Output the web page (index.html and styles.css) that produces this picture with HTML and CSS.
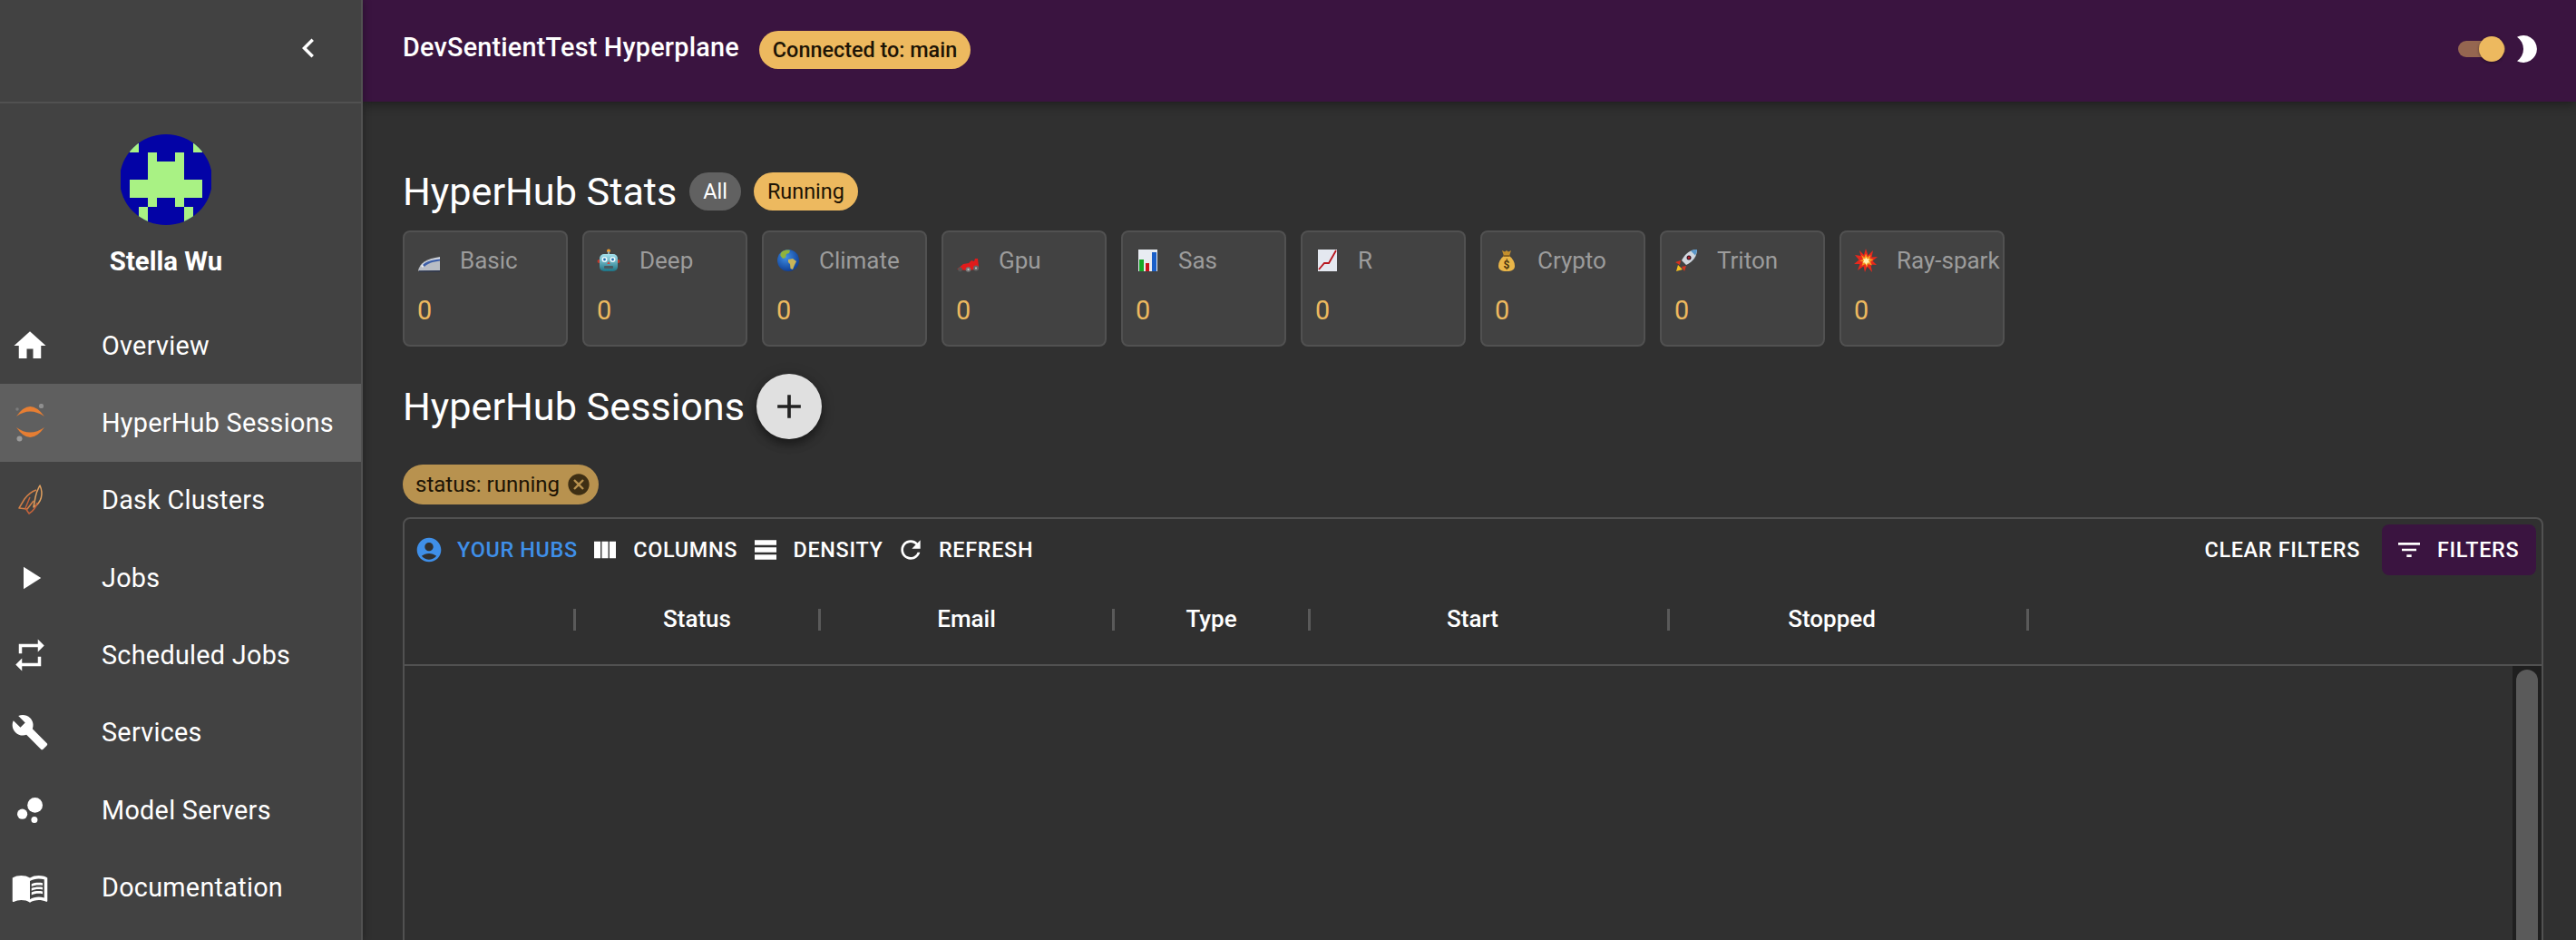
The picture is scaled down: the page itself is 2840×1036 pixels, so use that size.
FILE: index.html
```html
<!DOCTYPE html>
<html lang="en">
  <head>
    <meta charset="UTF-8" />
    <meta name="viewport" content="width=device-width, initial-scale=1.0" />
    <title>HyperHub Sessions</title>
    <link rel="stylesheet" href="styles.css">
  </head>
  <body>
    <div class="app">
      <aside class="sidebar">
        <div class="sidebar-top">
          <svg class="icon icon-nav" viewBox="0 0 24 24"><path d="M15.41 7.41 14 6l-6 6 6 6 1.41-1.41L10.83 12z"/></svg>
        </div>
        <div class="profile">
          <svg class="avatar" viewBox="0 0 10 10" shape-rendering="crispEdges">
            <rect width="10" height="10" fill="#0303a6"/>
            <path fill="#a9f284" d="M1 1h1v1H1zM8 1h1v1H8zM3 2h1v1H3zM6 2h1v1H6zM3 3h4v2H3zM1 5h8v2H1zM3 7h1v1H3zM6 7h1v1H6zM2 8h1v2H2zM7 8h1v2H7z"/>
          </svg>
          <div class="profile-name">Stella Wu</div>
        </div>
        <nav>
          <a class="nav-item">
            <svg class="icon icon-nav" viewBox="0 0 24 24"><path d="M10 20v-6h4v6h5v-8h3L12 3 2 12h3v8z"/></svg>
            <span>Overview</span>
          </a>
          <a class="nav-item active">
            <svg class="icon-nav" viewBox="0 0 42 42">
              <path fill="#e67e33" d="M6 14Q21-8 37 14Q21 3 6 14z"/>
              <path fill="#e67e33" d="M6 26Q21 48 37 26Q21 37 6 26z"/>
              <circle cx="33.5" cy="2.5" r="2.6" fill="#8f8f8f"/>
              <circle cx="9.5" cy="38.5" r="3" fill="#9a9a9a"/>
              <circle cx="7" cy="6" r="1.8" fill="#7c7c7c"/>
            </svg>
            <span>HyperHub Sessions</span>
          </a>
          <a class="nav-item">
            <svg class="icon-nav" viewBox="0 0 42 42" fill="none" stroke-width="1.5" stroke-linejoin="round">
              <path stroke="#e0a060" d="M32 5C36 14 34 24 25 29L27 18C28 12 30 9 32 5z"/>
              <path stroke="#d28048" d="M28 10C22 12 18 16 15 20L9 30 18 31 25 22"/>
              <path stroke="#c4623a" d="M21 18 16 30 20 36C25 33 28 28 29 24"/>
            </svg>
            <span>Dask Clusters</span>
          </a>
          <a class="nav-item">
            <svg class="icon icon-nav" viewBox="0 0 24 24"><path d="M8 5v14l11-7z"/></svg>
            <span>Jobs</span>
          </a>
          <a class="nav-item">
            <svg class="icon icon-nav" viewBox="0 0 24 24"><path d="M7 7h10v3l4-4-4-4v3H5v6h2V7zm10 10H7v-3l-4 4 4 4v-3h12v-6h-2v4z"/></svg>
            <span>Scheduled Jobs</span>
          </a>
          <a class="nav-item">
            <svg class="icon icon-nav" viewBox="0 0 24 24"><path d="M22.7 19l-9.1-9.1c.9-2.3.4-5-1.5-6.9-2-2-5-2.4-7.4-1.3L9 6 6 9 1.6 4.7C.4 7.1.9 10.1 2.9 12.1c1.9 1.9 4.6 2.4 6.9 1.5l9.1 9.1c.4.4 1 .4 1.4 0l2.3-2.3c.5-.4.5-1.1.1-1.4z"/></svg>
            <span>Services</span>
          </a>
          <a class="nav-item">
            <svg class="icon icon-nav" viewBox="0 0 24 24"><circle cx="7.2" cy="14.4" r="3.2"/><circle cx="14.8" cy="18" r="2"/><circle cx="15.2" cy="8.8" r="4.8"/></svg>
            <span>Model Servers</span>
          </a>
          <a class="nav-item">
            <svg class="icon icon-nav" viewBox="0 0 24 24"><path d="M21 5c-1.11-.35-2.33-.5-3.5-.5-1.95 0-4.05.4-5.5 1.5-1.45-1.1-3.55-1.5-5.5-1.5S2.45 4.9 1 6v14.65c0 .25.25.5.5.5.1 0 .15-.05.25-.05C3.1 20.45 5.05 20 6.5 20c1.95 0 4.05.4 5.5 1.5 1.35-.85 3.8-1.5 5.5-1.5 1.65 0 3.35.3 4.75 1.05.1.05.15.05.25.05.25 0 .5-.25.5-.5V6c-.6-.45-1.25-.75-2-1zm0 13.5c-1.1-.35-2.3-.5-3.5-.5-1.7 0-4.15.65-5.5 1.5V8c1.35-.85 3.8-1.5 5.5-1.5 1.2 0 2.4.15 3.5.5v11.5z"/><path d="M17.5 10.5c.88 0 1.73.09 2.5.26V9.24c-.79-.15-1.64-.24-2.5-.24-1.7 0-3.24.29-4.5.83v1.66c1.13-.64 2.7-.99 4.5-.99zM13 12.49v1.66c1.13-.64 2.7-.99 4.5-.99.88 0 1.73.09 2.5.26V11.9c-.79-.15-1.64-.24-2.5-.24-1.7 0-3.24.3-4.5.83zM17.5 14.33c-1.7 0-3.24.29-4.5.83v1.66c1.13-.64 2.7-.99 4.5-.99.88 0 1.73.09 2.5.26v-1.52c-.79-.16-1.64-.24-2.5-.24z"/></svg>
            <span>Documentation</span>
          </a>
        </nav>
      </aside>

      <div class="content">
        <header class="appbar">
          <div class="appbar-left">
            <div class="appbar-title">DevSentientTest Hyperplane</div>
            <span class="chip chip-amber chip-medium">Connected to: main</span>
          </div>
          <div class="appbar-right">
            <div class="switch"><div class="switch-thumb"></div></div>
            <svg class="icon icon-moon" viewBox="0 0 24 30"><path d="M1 1.700A15 15 0 1 1 1 28.300A16.100 16.100 0 0 0 1 1.700z"/></svg>
          </div>
        </header>

        <main>
          <section class="title-row stats-title">
            <h2>HyperHub Stats</h2>
            <span class="chip chip-grey">All</span>
            <span class="chip chip-amber">Running</span>
          </section>

          <section class="stats">
            <div class="stat">
              <div class="stat-head">
                <svg class="emoji" viewBox="0 0 26 26">
                  <path fill="#b9bdc5" d="M1 24C3 16 10 11 25 9v15L2 25z"/>
                  <path fill="#e8ebf0" d="M4 19C8 14 15 12 25 10v3C16 14 9 17 6 21z"/>
                  <path fill="#3c5ea8" d="M6 18C10 14 17 12 25 11.500V13.500C17 14.500 11 16.500 8 20z"/>
                  <path fill="#2a3550" d="M2 24.200h23V25.500H2z"/>
                </svg>
                <span>Basic</span>
              </div>
              <div class="stat-value">0</div>
            </div>
            <div class="stat">
              <div class="stat-head">
                <svg class="emoji" viewBox="0 0 26 26">
                  <defs><linearGradient id="robot" x1="0" y1="0" x2="0" y2="1"><stop offset="0" stop-color="#a5e2ee"/><stop offset="1" stop-color="#1c7385"/></linearGradient></defs>
                  <circle cx="13" cy="2.500" r="2" fill="#f0a030"/>
                  <rect x="12" y="3" width="2" height="4" fill="#9aa"/>
                  <circle cx="2.500" cy="14" r="2" fill="#c0392b"/>
                  <circle cx="23.500" cy="14" r="2" fill="#c0392b"/>
                  <rect x="3" y="6" width="20" height="19" rx="5" fill="url(#robot)"/>
                  <circle cx="8.500" cy="12" r="3" fill="#eaf8fb"/>
                  <circle cx="17.500" cy="12" r="3" fill="#eaf8fb"/>
                  <circle cx="8.500" cy="12" r="1.400" fill="#1f6fb0"/>
                  <circle cx="17.500" cy="12" r="1.400" fill="#1f6fb0"/>
                  <path fill="#d9453a" d="M13 14l1.800 3h-3.600z"/>
                  <rect x="8" y="19" width="10" height="3" rx="1" fill="#4a5a60"/>
                </svg>
                <span>Deep</span>
              </div>
              <div class="stat-value">0</div>
            </div>
            <div class="stat">
              <div class="stat-head">
                <svg class="emoji" viewBox="0 0 26 26">
                  <defs><radialGradient id="globe" cx=".4" cy=".35" r=".7"><stop offset="0" stop-color="#3f8fe6"/><stop offset="1" stop-color="#0d3a8f"/></radialGradient></defs>
                  <circle cx="13" cy="13" r="12" fill="url(#globe)"/>
                  <path fill="#8fb33c" d="M6 3.500C9 1.500 13 1.200 15 2l-1 3-3 1-1 4-3 1-2.500-3C4 6 5 4.500 6 3.500z"/>
                  <path fill="#c9b458" d="M13 12l5-1 4 3-2 4-2 5-2.500-1-.5-5-2-2z"/>
                </svg>
                <span>Climate</span>
              </div>
              <div class="stat-value">0</div>
            </div>
            <div class="stat">
              <div class="stat-head">
                <svg class="emoji" viewBox="0 0 26 26">
                  <path fill="#e01b1b" d="M1 23l7-6 6-1 3-3 3 1 1-3 3 0 1 9-4 3-8 1z"/>
                  <circle cx="4.500" cy="23" r="2.400" fill="#555"/>
                  <circle cx="13.500" cy="23" r="2.800" fill="#777"/>
                  <circle cx="22" cy="21.500" r="3" fill="#666"/>
                  <circle cx="13.500" cy="23" r="1" fill="#ccc"/>
                  <circle cx="22" cy="21.500" r="1" fill="#ccc"/>
                </svg>
                <span>Gpu</span>
              </div>
              <div class="stat-value">0</div>
            </div>
            <div class="stat">
              <div class="stat-head">
                <svg class="emoji" viewBox="0 0 26 26">
                  <rect x="3" y="1" width="21" height="24" fill="#e8ecf2"/>
                  <rect x="4" y="12" width="5" height="13" fill="#18a828"/>
                  <rect x="11" y="16" width="4" height="9" fill="#c8141c"/>
                  <rect x="18" y="4" width="5" height="21" fill="#1a5fc8"/>
                </svg>
                <span>Sas</span>
              </div>
              <div class="stat-value">0</div>
            </div>
            <div class="stat">
              <div class="stat-head">
                <svg class="emoji" viewBox="0 0 26 26">
                  <rect x="3" y="1" width="21" height="24" fill="#e4e8f0"/>
                  <path fill="none" stroke="#b8141c" stroke-width="1.800" d="M4 23l6-7 5 0 8-14"/>
                </svg>
                <span>R</span>
              </div>
              <div class="stat-value">0</div>
            </div>
            <div class="stat">
              <div class="stat-head">
                <svg class="emoji" viewBox="0 0 26 26">
                  <path fill="#c48f2c" d="M8 2l3 1.500L13 2l2 1.500L18 2l-2 6h-6z"/>
                  <path fill="#e9b548" d="M10 8h6c4 3 6 7 6 11 0 4-3 6-9 6s-9-2-9-6c0-4 2-8 6-11z"/>
                  <rect x="9.500" y="7" width="7" height="2" fill="#8c6420"/>
                  <text class="emoji-sign" x="13" y="22" text-anchor="middle">$</text>
                </svg>
                <span>Crypto</span>
              </div>
              <div class="stat-value">0</div>
            </div>
            <div class="stat">
              <div class="stat-head">
                <svg class="emoji" viewBox="0 0 26 26">
                  <path fill="#f4c020" d="M2 25l2-7 5 5z"/>
                  <path fill="#d8301c" d="M1 15l6-2-1 5zM11 25l2-6-5 1z"/>
                  <path fill="#cfd6de" d="M25 1c-7 0-13 4-17 12l5 5c8-4 12-10 12-17z"/>
                  <path fill="#5a96c8" d="M25 1c-3 0-5 .5-7 1.500l5 5c1-2 2-4 2-6.500z"/>
                  <circle cx="16" cy="10" r="2.500" fill="#3a1420"/>
                  <circle cx="16" cy="10" r="1.200" fill="#c0202c"/>
                </svg>
                <span>Triton</span>
              </div>
              <div class="stat-value">0</div>
            </div>
            <div class="stat">
              <div class="stat-head">
                <svg class="emoji" viewBox="0 0 26 26">
                  <path fill="#e8281c" d="M13 0l2.500 7.500L21 2l-1.500 7.500L26 9l-5.500 4.500L25 18l-6.500-.5L20 26l-5.500-6.500L12 26l-1.500-6.500L4 24l2.500-7L0 17l5.500-4.500L1 7l6.500 1L6 2l5 5z"/>
                  <path fill="#f7941d" d="M13 5.500l1.800 4L18.500 7l-1 4 4 1-3.500 2.500 2 4-4.500-1.500-1.500 4-1.500-4-4 2 1.500-4.500-4-1 4-1.500L8 7l3.500 2.500z"/>
                  <path fill="#fff3b0" d="M13 9l1.500 2.500 2.500-.5-1 2.500 1.500 2-2.500 0-1.500 2.500-1.500-2.500-2.500 0 1.500-2-1-2.500 2.500.5z"/>
                </svg>
                <span>Ray-spark</span>
              </div>
              <div class="stat-value">0</div>
            </div>
          </section>

          <section class="title-row sessions-title">
            <h2>HyperHub Sessions</h2>
            <button class="fab">
              <svg class="icon-fab" viewBox="0 0 24 24"><path d="M19 13h-6v6h-2v-6H5v-2h6V5h2v6h6v2z"/></svg>
            </button>
          </section>

          <div class="filter-row">
            <span class="filter-chip">
              status: running
              <svg class="icon-cancel" viewBox="0 0 24 24"><path d="M12 2C6.470 2 2 6.470 2 12s4.470 10 10 10 10-4.470 10-10S17.530 2 12 2zm5 13.590L15.590 17 12 13.410 8.410 17 7 15.590 10.590 12 7 8.410 8.410 7 12 10.590 15.590 7 17 8.410 13.410 12 17 15.590z"/></svg>
            </span>
          </div>

          <section class="table">
            <div class="toolbar">
              <div class="toolbar-group">
                <button class="tool tool-blue">
                  <svg class="icon icon-tool" viewBox="0 0 24 24"><path d="M12 2C6.480 2 2 6.480 2 12s4.480 10 10 10 10-4.480 10-10S17.520 2 12 2zm0 4c1.930 0 3.500 1.570 3.500 3.500S13.930 13 12 13s-3.500-1.570-3.500-3.500S10.070 6 12 6zm0 14c-2.030 0-4.430-.820-6.140-2.880C7.550 15.800 9.680 15 12 15s4.450.800 6.140 2.120C16.430 19.180 14.030 20 12 20z"/></svg>
                  YOUR HUBS
                </button>
                <button class="tool">
                  <svg class="icon icon-tool" viewBox="0 0 24 24"><path d="M14.670 5v14H9.330V5h5.340zm1 14H21V5h-5.330v14zm-7.340 0V5H3v14h5.330z"/></svg>
                  COLUMNS
                </button>
                <button class="tool">
                  <svg class="icon icon-tool" viewBox="0 0 24 24"><path d="M21 8H3V4h18v4zm0 2H3v4h18v-4zm0 6H3v4h18v-4z"/></svg>
                  DENSITY
                </button>
                <button class="tool">
                  <svg class="icon icon-tool" viewBox="0 0 24 24"><path d="M17.650 6.350C16.200 4.900 14.210 4 12 4c-4.420 0-7.990 3.580-7.990 8s3.570 8 7.990 8c3.730 0 6.840-2.550 7.730-6h-2.080c-.820 2.330-3.040 4-5.650 4-3.310 0-6-2.690-6-6s2.690-6 6-6c1.660 0 3.140.690 4.220 1.780L13 11h7V4l-2.350 2.350z"/></svg>
                  REFRESH
                </button>
              </div>
              <div class="toolbar-group toolbar-right">
                <button class="tool">CLEAR FILTERS</button>
                <button class="tool tool-filter">
                  <svg class="icon icon-tool" viewBox="0 0 24 24"><path d="M10 18h4v-2h-4v2zM3 6v2h18V6H3zm3 7h12v-2H6v2z"/></svg>
                  FILTERS
                </button>
              </div>
            </div>
            <div class="columns">
              <div class="col col-blank"><div class="col-label"></div><div class="col-sep"></div></div>
              <div class="col col-status"><div class="col-label">Status</div><div class="col-sep"></div></div>
              <div class="col col-email"><div class="col-label">Email</div><div class="col-sep"></div></div>
              <div class="col col-type"><div class="col-label">Type</div><div class="col-sep"></div></div>
              <div class="col col-date"><div class="col-label">Start</div><div class="col-sep"></div></div>
              <div class="col col-date"><div class="col-label">Stopped</div><div class="col-sep"></div></div>
            </div>
            <div class="rows">
              <div class="scrollbar"><div class="scrollbar-thumb"></div></div>
            </div>
          </section>
        </main>
      </div>
    </div>
  </body>
</html>
```

FILE: styles.css
```css
* {
  padding: 0;
  margin: 0;
  box-sizing: border-box;
}
html {
  font-family: Roboto, 'Liberation Sans', sans-serif;
  color: #fff;
  background-color: #303030;
}
body {
  height: 100vh;
  overflow: hidden;
}
button {
  border: none;
  background: none;
  color: inherit;
  font-family: inherit;
}
.icon {
  fill: #fff;
}

/* sidebar */
.app {
  display: flex;
  height: 100%;
}
.sidebar {
  flex: 0 0 400px;
  background-color: #424242;
  border-right: 2px solid #515151;
  position: relative;
  z-index: 2;
  box-shadow: 2px 0 8px rgba(0, 0, 0, 0.2);
}
.sidebar-top {
  height: 114px;
  display: flex;
  align-items: center;
  justify-content: flex-end;
  padding: 0 37px 6px 0;
  border-bottom: 2px solid #515151;
}
.profile {
  display: flex;
  flex-direction: column;
  align-items: center;
  padding: 34px 32px 32px 0;
}
.avatar {
  width: 102px;
  height: 100px;
  border-radius: 50%;
}
.profile-name {
  margin-top: 22px;
  font-size: 29.4px;
  font-weight: 700;
  line-height: 36px;
}
.nav-item {
  display: flex;
  align-items: center;
  height: 85.33px;
  padding-left: 12px;
  font-size: 28.8px;
  letter-spacing: 0.00938em;
}
.nav-item.active {
  background-color: #5f5f5f;
}
.icon-nav {
  width: 42px;
  height: 42px;
  flex: none;
}
.nav-item span {
  margin-left: 58px;
}

/* top bar */
.content {
  flex: 1;
  min-width: 0;
  display: flex;
  flex-direction: column;
}
.appbar {
  flex: 0 0 112px;
  display: flex;
  align-items: center;
  justify-content: space-between;
  padding: 0 42px 2px 44px;
  background-color: #3a1440;
  box-shadow: 0 4px 10px rgba(0, 0, 0, 0.35);
  position: relative;
  z-index: 1;
}
.appbar-left,
.appbar-right {
  display: flex;
  align-items: center;
}
.appbar-right {
  margin-bottom: 2px;
}
.appbar-title {
  font-size: 28.8px;
  font-weight: 500;
  letter-spacing: 0.0075em;
  margin: 0 22px 6px 0;
}
.switch {
  width: 52px;
  height: 18px;
  border-radius: 9px;
  background-color: #956650;
  position: relative;
}
.switch-thumb {
  position: absolute;
  right: 1px;
  top: -5px;
  width: 28px;
  height: 28px;
  border-radius: 50%;
  background-color: #edb95f;
  box-shadow: 0 1px 3px rgba(0, 0, 0, 0.4);
}
.icon-moon {
  width: 24px;
  height: 30px;
  margin-left: 12px;
}

/* chips */
.chip {
  display: inline-flex;
  align-items: center;
  height: 42px;
  padding: 0 15px;
  border-radius: 21px;
  font-size: 23.4px;
}
.chip-amber {
  background-color: #edb95f;
  color: #1d1405;
}
.chip-grey {
  background-color: #616161;
}
.chip-medium {
  font-weight: 500;
}

/* page */
main {
  flex: 1;
  min-height: 0;
  padding: 78px 36px 0 44px;
  overflow: hidden;
}
.title-row {
  display: flex;
  align-items: center;
}
h2 {
  font-size: 43.2px;
  font-weight: 400;
}
.stats-title {
  height: 42px;
  margin-bottom: 22px;
  gap: 14px;
}
.stats {
  display: flex;
  gap: 16px;
}
.stat {
  width: 182px;
  height: 128px;
  flex: none;
  padding: 17px 0 0 14px;
  background-color: #424242;
  border: 2px solid #515151;
  border-radius: 8px;
}
.stat-head {
  display: flex;
  align-items: center;
  height: 28px;
  font-size: 26px;
  color: #9c9c9c;
  white-space: nowrap;
}
.emoji {
  width: 26px;
  height: 26px;
  flex: none;
  margin-right: 21px;
}
.emoji-sign {
  font-family: Roboto, sans-serif;
  font-size: 12px;
  font-weight: 700;
  fill: #4a3410;
}
.stat-value {
  margin-top: 25px;
  font-size: 28.8px;
  line-height: 32px;
  color: #edb95f;
}
.sessions-title {
  height: 72px;
  margin-top: 30px;
  gap: 13px;
}
.fab {
  width: 72px;
  height: 72px;
  border-radius: 50%;
  background-color: #e0e0e0;
  display: flex;
  align-items: center;
  justify-content: center;
  box-shadow: 0 6px 10px rgba(0, 0, 0, 0.35), 0 2px 16px rgba(0, 0, 0, 0.2);
}
.icon-fab {
  width: 44px;
  height: 44px;
  fill: #222;
}
.filter-row {
  margin-top: 28px;
  display: flex;
}
.filter-chip {
  display: inline-flex;
  align-items: center;
  height: 44px;
  padding: 0 8px 0 14px;
  border-radius: 22px;
  background-color: #b8924f;
  color: #1d1405;
  font-size: 24px;
}
.icon-cancel {
  width: 28px;
  height: 28px;
  margin-left: 7px;
  fill: #3e2f14;
}

/* table */
.table {
  margin-top: 14px;
  height: 600px;
  border: 2px solid #515151;
  border-radius: 8px;
}
.toolbar {
  display: flex;
  justify-content: space-between;
  height: 62px;
  padding: 6px 6px 0 11px;
}
.toolbar-group {
  display: flex;
  align-items: center;
  gap: 14.5px;
}
.toolbar-right {
  gap: 24px;
}
.tool {
  display: flex;
  align-items: center;
  gap: 15px;
  height: 56px;
  font-size: 23.4px;
  font-weight: 500;
  letter-spacing: 0.02857em;
}
.tool-blue {
  color: #3f8fe8;
}
.tool-blue .icon {
  fill: #3f8fe8;
}
.tool-filter {
  width: 170px;
  padding-left: 14px;
  border-radius: 8px;
  background-color: #3a1440;
}
.icon-tool {
  width: 32px;
  height: 32px;
}
.columns {
  display: flex;
  height: 100px;
  border-bottom: 2px solid #515151;
}
.col {
  display: flex;
  align-items: center;
}
.col-blank {
  width: 189px;
}
.col-status {
  width: 270px;
}
.col-email {
  width: 324px;
}
.col-type {
  width: 216px;
}
.col-date {
  width: 396px;
}
.col-date .col-label {
  padding-right: 36px;
}
.col-label {
  flex: 1;
  padding-bottom: 3px;
  text-align: center;
  font-size: 26px;
  font-weight: 500;
}
.col-sep {
  width: 3px;
  height: 24px;
  background-color: #5a5a5a;
}
.rows {
  display: flex;
  justify-content: flex-end;
  height: 400px;
}
.scrollbar {
  width: 32px;
  padding: 4px;
  background-color: #1f1f1f;
}
.scrollbar-thumb {
  height: 100%;
  border-radius: 12px;
  background-color: #5a5a5a;
}
```
